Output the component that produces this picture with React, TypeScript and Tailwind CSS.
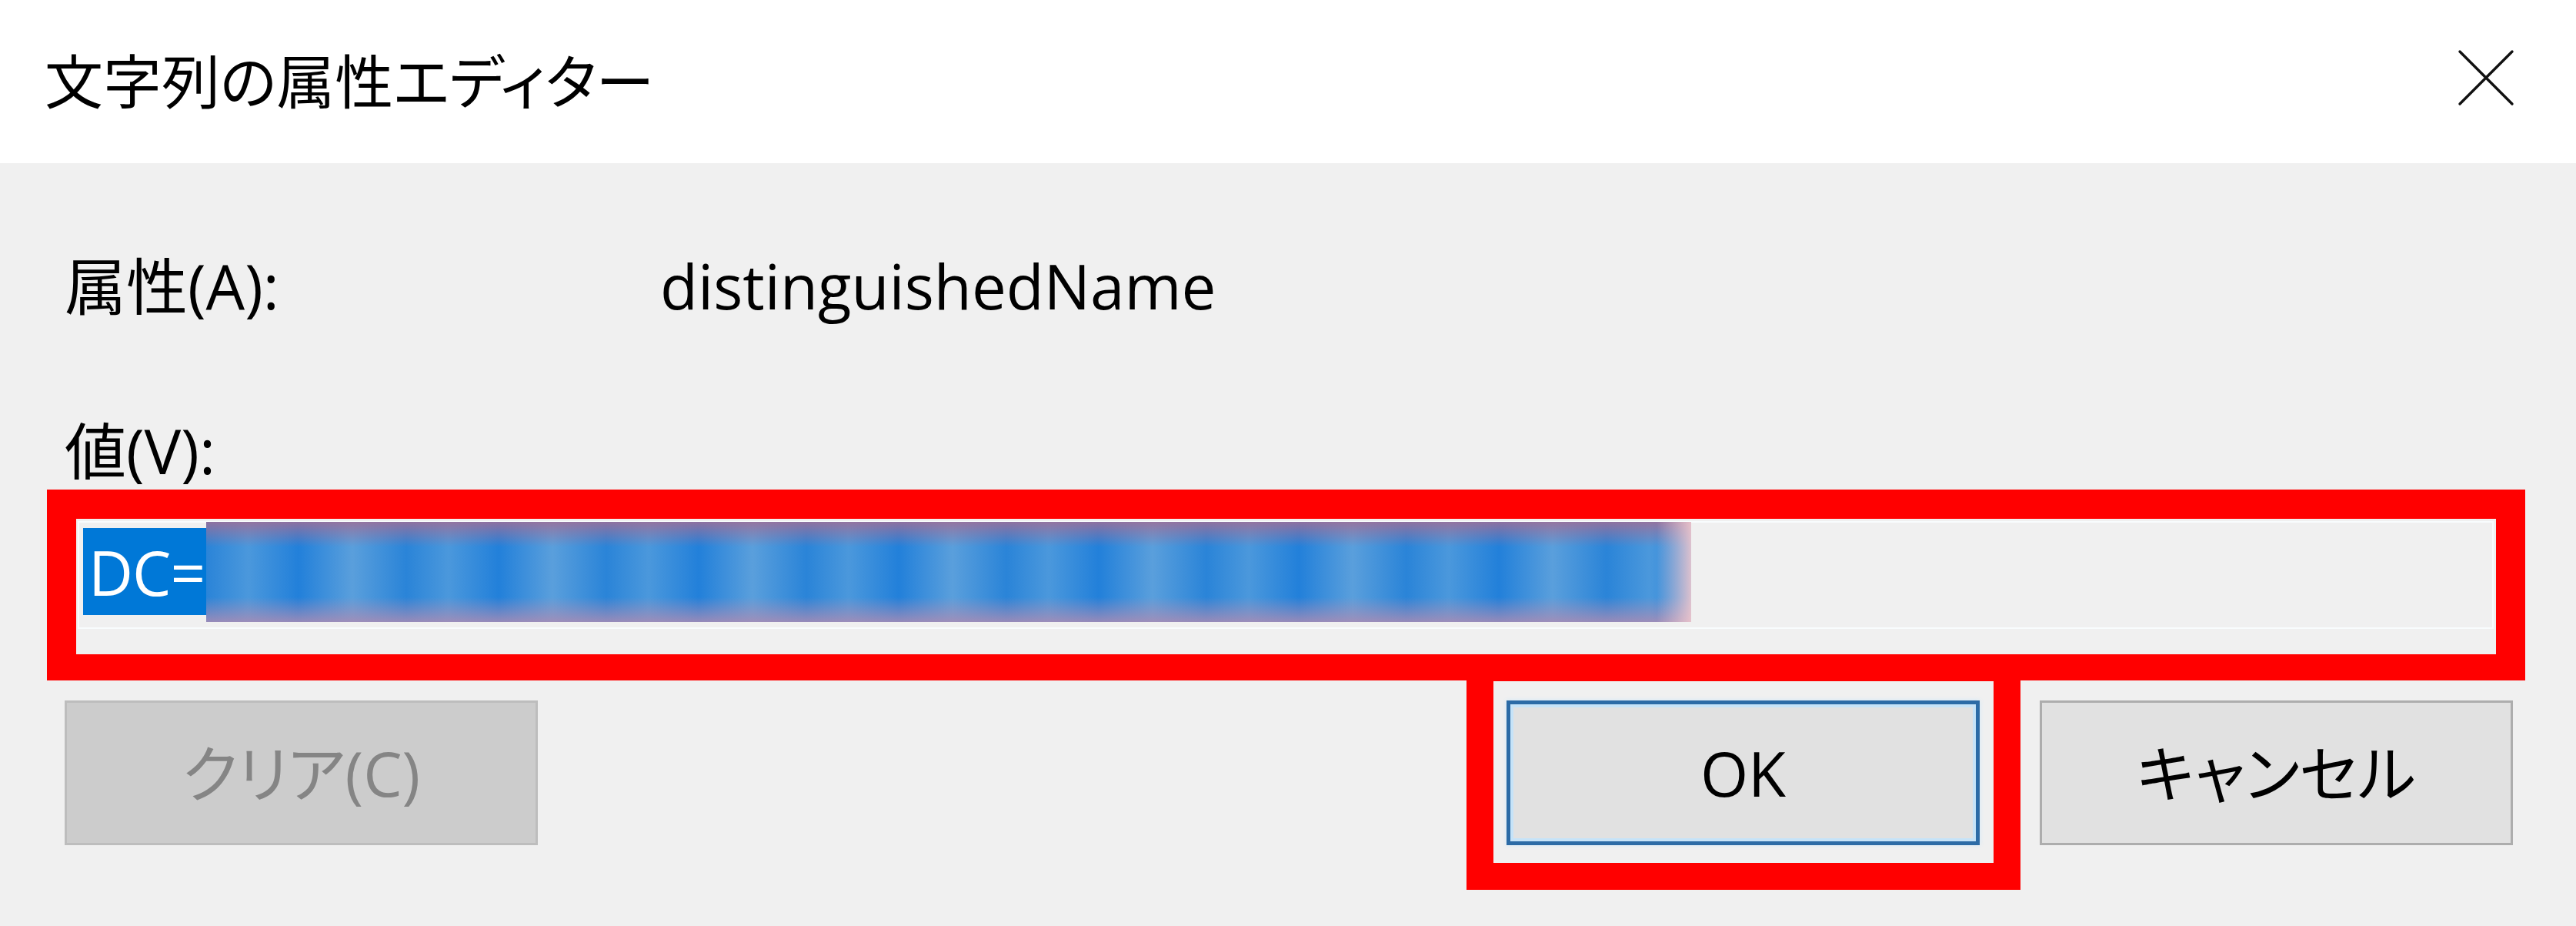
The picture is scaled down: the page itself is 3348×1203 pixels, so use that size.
import React from 'react';

const font = "font-['Open_Sans','Noto_Sans_CJK_JP',sans-serif] [font-feature-settings:'palt']";

function CloseIcon() {
  return (
    <svg width="74" height="74" viewBox="0 0 74 74" fill="none">
      <path d="M3 3L71 71M71 3L3 71" stroke="#111" strokeWidth="3.4" strokeLinecap="round" />
    </svg>
  );
}

function TitleBar() {
  return (
    <div className="flex h-[212px] items-center justify-between bg-white pl-[58px] pr-[80px]">
      <span className="text-[76px] leading-none text-black">文字列の属性エディター</span>
      <div className="mb-[10px]">
        <CloseIcon />
      </div>
    </div>
  );
}

function ValueField() {
  return (
    // red annotation frame around the text box
    <div className="-ml-[23px] -mr-[16px] mt-px border-[38px] border-b-[34px] border-[#ff0000]">
      <div className="mb-[33px] ml-[2px] mr-[3px] mt-[3px] flex h-[140px] items-start border-2 border-[#f8fcfd] bg-[#f0f0f0] pl-[5px]">
        <span className="mt-[7px] flex h-[113px] w-[160px] items-center bg-[#0078d7] pl-[7px] text-[80px] leading-none tracking-[-1px] text-white">
          DC=
        </span>
        {/* blurred part of the value */}
        <div className="mt-[-1px] h-[130px] w-[1930px] bg-[linear-gradient(90deg,transparent_calc(100%_-_45px),rgba(240,200,205,0.9)),linear-gradient(180deg,rgba(160,110,150,0.85)_0%,rgba(160,110,150,0)_25%,rgba(160,110,150,0)_75%,rgba(170,140,180,0.85)_100%),repeating-linear-gradient(90deg,#2a84d8_0px,#4b98dc_55px,#2280da_120px,#5a9fdc_190px,#2a84d8_260px),linear-gradient(180deg,#3d85cc,#4a9ade_50%,#6e9bd0)]" />
      </div>
    </div>
  );
}

function Button({ label, disabled, primary }: { label: string; disabled?: boolean; primary?: boolean }) {
  if (disabled) {
    return (
      <div className="flex h-[188px] w-[615px] items-center justify-center border-[3px] border-[#bdbdbd] bg-[#cccccc] text-[80px] leading-none text-[#858585]">
        {label}
      </div>
    );
  }
  if (primary) {
    return (
      <div className="flex h-[188px] w-[615px] items-center justify-center border-[5px] border-[#2c6ba6] bg-[#e1e1e1] text-[80px] leading-none text-black shadow-[inset_0_0_0_4px_#c6e3f8,0_0_6px_#cfe6f7]">
        {label}
      </div>
    );
  }
  return (
    <div className="flex h-[188px] w-[615px] items-center justify-center border-[3px] border-[#adadad] bg-[#e1e1e1] text-[80px] leading-none text-black">
      {label}
    </div>
  );
}

export default function App() {
  return (
    <div className={`${font} h-[1203px] w-[3348px] overflow-hidden bg-[#f0f0f0]`}>
      <TitleBar />
      <div className="pl-[84px] pr-[82px] pt-[109px]">
        <div className="flex h-[100px] items-center text-[80px] leading-none text-black">
          <span className="w-[774px]">属性(A):</span>
          <span>distinguishedName</span>
        </div>
        <div className="mt-[114px] flex h-[100px] items-center text-[80px] leading-none text-black">
          <span>値(V):</span>
        </div>
        <ValueField />
        <div className="mt-[26px] flex items-start justify-between">
          <Button label="クリア(C)" disabled />
          <div className="flex gap-[78px]">
            <div className="relative">
              <Button label="OK" primary />
              {/* red annotation around OK */}
              <div className="pointer-events-none absolute -bottom-[58px] -left-[52px] -right-[53px] -top-[60px] border-[35px] border-[#ff0000]" />
            </div>
            <Button label="キャンセル" />
          </div>
        </div>
      </div>
    </div>
  );
}
